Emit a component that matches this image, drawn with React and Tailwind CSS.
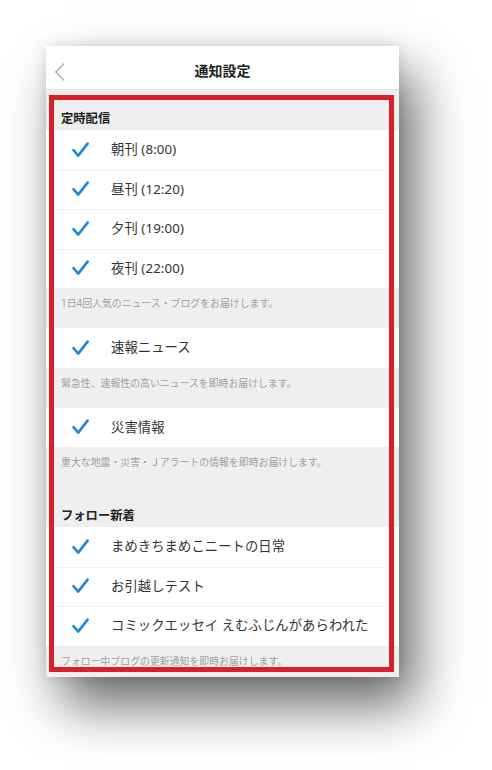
import React from "react";

const FONT = { fontFamily: '"Noto Sans CJK JP", "Noto Sans", sans-serif' };
const ITEM_FONT = { fontFamily: '"Noto Sans", "Noto Sans CJK JP", sans-serif' };

function Check() {
  return (
    <svg width="17" height="16" viewBox="0 0 17 16" fill="none">
      <path d="M1.5 8.2 L6.2 13.6 L15.6 1.6" stroke="#1f88d3" strokeWidth="2.6" strokeLinecap="round" strokeLinejoin="round" />
    </svg>
  );
}

function Row({ label, first }) {
  return (
    <div className="relative flex h-[39.5px] items-center bg-white">
      {!first && <div className="absolute left-[10px] right-[14px] top-0 h-px bg-[#f0f0f0]" />}
      <div className="flex w-[65px] shrink-0 justify-center pl-[3px]">
        <Check />
      </div>
      <span className="text-[13.3px] leading-none tracking-[0.1px] text-[#333]" style={ITEM_FONT}>{label}</span>
    </div>
  );
}

function SectionHeader({ title }) {
  return (
    <div className="h-[40px] pl-[15px] pt-[20px]">
      <div className="text-[12.3px] font-bold leading-[16px] text-[#222]">{title}</div>
    </div>
  );
}

function Footer({ text }) {
  return (
    <div className="h-[40px] pl-[15px] pt-[9px]">
      <div className="text-[9.9px] leading-[12px] text-[#a0a0a0]" style={ITEM_FONT}>{text}</div>
    </div>
  );
}

export default function App() {
  return (
    <div className="h-[770px] w-[492px] overflow-hidden bg-white pl-[46px] pt-[46px]" style={FONT}>
      <div className="relative h-[631px] w-[353px] overflow-hidden bg-[#efefef] shadow-[16px_28px_50px_rgba(0,0,0,0.6),0_0_12px_rgba(0,0,0,0.12)]">
        <div className="relative flex h-[44px] items-center justify-center border-b border-[#e4e4e4] bg-white pt-[6px]">
          <svg className="absolute left-[8px] top-[17px]" width="11" height="18" viewBox="0 0 11 18" fill="none">
            <path d="M9.5 1 L1.8 9 L9.5 17" stroke="#b3b3b3" strokeWidth="1.6" strokeLinecap="round" strokeLinejoin="round" />
          </svg>
          <span className="text-[14px] font-bold text-[#222]">通知設定</span>
        </div>

        <SectionHeader title="定時配信" />
        <Row label="朝刊 (8:00)" first />
        <Row label="昼刊 (12:20)" />
        <Row label="夕刊 (19:00)" />
        <Row label="夜刊 (22:00)" />
        <Footer text="1日4回人気のニュース・ブログをお届けします。" />
        <Row label="速報ニュース" first />
        <Footer text="緊急性、速報性の高いニュースを即時お届けします。" />
        <Row label="災害情報" first />
        <Footer text="重大な地震・災害・Ｊアラートの情報を即時お届けします。" />

        <SectionHeader title="フォロー新着" />
        <Row label="まめきちまめこニートの日常" first />
        <Row label="お引越しテスト" />
        <Row label="コミックエッセイ えむふじんがあらわれた" />
        <Footer text="フォロー中ブログの更新通知を即時お届けします。" />

        <div className="pointer-events-none absolute left-[3px] top-[49px] h-[577px] w-[345px] border-[5px] border-[#d8202b]" />
      </div>
    </div>
  );
}
